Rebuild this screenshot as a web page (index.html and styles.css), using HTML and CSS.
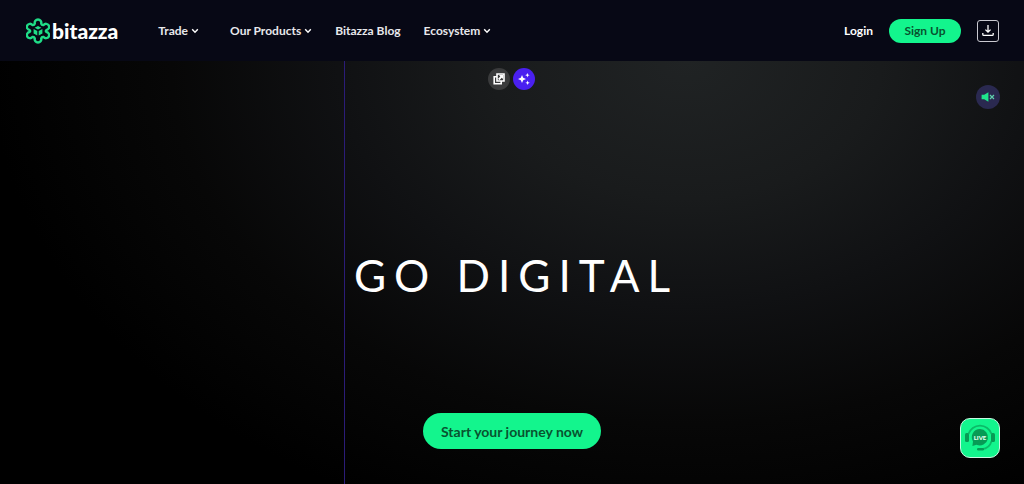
FILE: index.html
```html
<!DOCTYPE html>
<html lang="en">
<head>
    <meta charset="UTF-8">
    <meta name="viewport" content="width=device-width, initial-scale=1.0">
    <title>Bitazza</title>
    <link rel="stylesheet" href="styles.css">
</head>
<body>
    <header class="header">
        <a href="#" class="logo">
            <svg class="logo-mark" width="24" height="26" viewBox="0 0 24 26" fill="none" stroke="#1fdc87" stroke-linejoin="round" stroke-linecap="round">
                <path stroke-width="2.4" d="M8.8 5.6 A3.3 3.3 0 1 1 15.2 5.6 Q15.8 7.4 17.6 7 A3.1 3.1 0 1 1 20.4 12 Q19.4 13 20.4 14 A3.1 3.1 0 1 1 17.6 19 Q15.8 18.6 15.2 20.4 A3.3 3.3 0 1 1 8.8 20.4 Q8.2 18.6 6.4 19 A3.1 3.1 0 1 1 3.6 14 Q4.6 13 3.6 12 A3.1 3.1 0 1 1 6.4 7 Q8.2 7.4 8.8 5.6 Z"/>
                <path fill="#1fdc87" stroke="none" d="M12 8 L15.4 9.8 L12 11.6 L8.6 9.8 Z M7.6 11 L11.3 13 V17.4 L7.6 15.4 Z M16.4 11 L12.7 13 V17.4 L16.4 15.4 Z"/>
            </svg>
            <span class="logo-text">bitazza</span>
        </a>
        <nav class="nav">
            <a href="#" class="nav-main">Trade <svg class="chevron" viewBox="0 0 8 6"><path d="M1.2 1.2 L4 4.2 L6.8 1.2"/></svg></a>
            <a href="#">Our Products <svg class="chevron" viewBox="0 0 8 6"><path d="M1.2 1.2 L4 4.2 L6.8 1.2"/></svg></a>
            <a href="#">Bitazza Blog</a>
            <a href="#">Ecosystem <svg class="chevron" viewBox="0 0 8 6"><path d="M1.2 1.2 L4 4.2 L6.8 1.2"/></svg></a>
        </nav>
        <div class="account">
            <a href="#" class="login">Login</a>
            <button type="button" class="signup">Sign Up</button>
            <button type="button" class="download" aria-label="Download app">
                <svg width="12" height="13" viewBox="0 0 12 13" fill="none" stroke="#fff" stroke-width="1.3">
                    <path d="M6 1 V8 M3.4 5.6 L6 8.2 L8.6 5.6 M.8 9 V10.4 Q.8 11.4 1.8 11.4 H10.2 Q11.2 11.4 11.2 10.4 V9"/>
                </svg>
            </button>
        </div>
    </header>

    <main class="hero">
        <div class="tools">
            <button type="button" class="tool" aria-label="Open copy">
                <svg width="12" height="12" viewBox="0 0 12 12" fill="none" stroke="#fff" stroke-width="1.6">
                    <path d="M4 1 H11 V8 H4 Z M3.6 3.8 H1.2 V10.8 H8.2 V8.6"/>
                    <path fill="#fff" stroke="none" d="M6 2 H10 V6 L8.8 4.8 L6.4 7.2 L5 5.8 L7.3 3.4 Z"/>
                </svg>
            </button>
            <button type="button" class="tool tool-ai" aria-label="Sparkle">
                <svg width="14" height="14" viewBox="0 0 14 14" fill="#fff">
                    <path d="M5 3 L6.2 5.8 L9 7 L6.2 8.2 L5 11 L3.8 8.2 L1 7 L3.8 5.8 Z M10.4 1 L11 2.6 L12.6 3.2 L11 3.8 L10.4 5.4 L9.8 3.8 L8.2 3.2 L9.8 2.6 Z M10.6 8.6 L11.2 10.2 L12.8 10.8 L11.2 11.4 L10.6 13 L10 11.4 L8.4 10.8 L10 10.2 Z"/>
                </svg>
            </button>
        </div>
        <button type="button" class="mute" aria-label="Unmute">
            <svg width="14" height="10" viewBox="0 0 14 10">
                <path fill="#1fe58c" d="M.6 2.8 H3.2 L7.4 .2 V9.8 L3.2 7.2 H.6 Z"/>
                <path fill="none" stroke="#5fd0ac" stroke-width="1.2" d="M9 3 L13 7 M13 3 L9 7"/>
            </svg>
        </button>
        <h1 class="title">GO DIGITAL</h1>
        <button type="button" class="start">Start your journey now</button>
        <button type="button" class="live" aria-label="Live chat">
            <svg width="36" height="36" viewBox="0 0 36 36">
                <path fill="none" stroke="#0cbb68" stroke-width="1.8" d="M6.4 14 A12.2 12.2 0 0 1 29.6 14 M29.6 21 Q27.6 28.2 20 29.2"/>
                <rect x="3" y="13" width="4" height="9" rx="1.5" fill="#079b55"/>
                <rect x="29" y="13" width="4" height="9" rx="1.5" fill="#079b55"/>
                <rect x="15" y="28" width="7" height="2.4" rx="1.2" fill="#079b55"/>
                <path fill="#079b55" d="M18 9 A8.2 8.2 0 1 1 14.5 24.7 L10.4 26 L11 21.5 A8.2 8.2 0 0 1 18 9 Z"/>
                <text x="18" y="20" text-anchor="middle" class="live-text">LIVE</text>
            </svg>
        </button>
    </main>
</body>
</html>
```
FILE: styles.css
```css
* {
    box-sizing: border-box;
}

body {
    margin: 0;
    min-height: 100vh;
    display: flex;
    flex-direction: column;
    background-color: #000;
    color: #fff;
    font-family: Lato, sans-serif;
}

a {
    color: inherit;
    text-decoration: none;
}

button {
    padding: 0;
    border: none;
    font-family: inherit;
    cursor: pointer;
}

.header {
    display: flex;
    align-items: center;
    height: 61px;
    padding: 0 25px 0 26px;
    background-color: #070815;
}

.logo {
    display: flex;
    align-items: center;
    gap: 2px;
    margin-right: 40px;
}

.logo-text {
    font-size: 21px;
    line-height: 24px;
    font-weight: 900;
}

.nav {
    display: flex;
    gap: 23px;
    font-size: 12px;
    font-weight: bold;
}

.nav a {
    display: flex;
    align-items: center;
    gap: 3px;
    color: #e8e8ec;
    white-space: nowrap;
}

.nav .nav-main {
    margin-right: 8px;
}

.chevron {
    width: 8px;
    height: 6px;
    fill: none;
    stroke: #fff;
    stroke-width: 1.4;
}

.account {
    display: flex;
    align-items: center;
    gap: 16px;
    margin-left: auto;
    font-size: 12px;
    font-weight: bold;
}

.signup {
    width: 72px;
    height: 24px;
    border-radius: 12px;
    background-color: #13f58d;
    color: #08532f;
    font-size: 12px;
    font-weight: bold;
}

.download {
    display: flex;
    align-items: center;
    justify-content: center;
    width: 22px;
    height: 22px;
    border: 1px solid #c9c9d0;
    border-radius: 3px;
    background: none;
}

/* Hero */
.hero {
    position: relative;
    flex: 1;
    display: flex;
    flex-direction: column;
    align-items: center;
    justify-content: space-between;
    padding: 7px 24px 35px;
    background: radial-gradient(ellipse 68% 116% at 67% 0, #202324 0, #191b1c 28%, #101113 50%, #070707 74%, #000 100%);
}

.hero::before {
    content: "";
    position: absolute;
    top: 0;
    bottom: 0;
    left: 344px;
    width: 1px;
    background-color: #2b1c78;
}

.tools {
    display: flex;
    gap: 3px;
    padding-right: 2px;
}

.tool {
    display: flex;
    align-items: center;
    justify-content: center;
    width: 22px;
    height: 22px;
    border-radius: 50%;
    background-color: #3a3b3c;
}

.tool-ai {
    background-color: #4a20f0;
}

.mute {
    position: absolute;
    top: 24px;
    right: 24px;
    display: flex;
    align-items: center;
    justify-content: center;
    width: 24px;
    height: 24px;
    border-radius: 50%;
    background-color: #2a2950;
}

.title {
    margin: 46px 0 0;
    padding-left: 8px;
    font-size: 44px;
    line-height: 52px;
    font-weight: normal;
    letter-spacing: 8px;
    white-space: nowrap;
}

.start {
    height: 36px;
    padding: 0 18px;
    border-radius: 18px;
    background-color: #13f58d;
    color: #08532f;
    font-size: 14px;
    font-weight: bold;
}

.live {
    position: absolute;
    right: 24px;
    bottom: 26px;
    display: flex;
    align-items: center;
    justify-content: center;
    width: 40px;
    height: 40px;
    border: 1px solid #c6fbe2;
    border-radius: 10px;
    background-color: #13f58d;
}

.live-text {
    fill: #e9fff4;
    font-size: 6px;
    font-weight: 900;
}
```
